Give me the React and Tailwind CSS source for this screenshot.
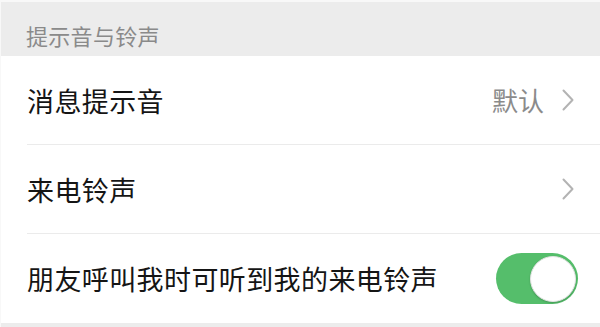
const font = { fontFamily: '"Noto Sans CJK SC", "Noto Sans", sans-serif' };

const Chevron = () => (
  <svg width="12" height="22" viewBox="0 0 12 22" fill="none" className="shrink-0">
    <path d="M1.5 1.5 L10.5 11 L1.5 20.5" stroke="#b3b3b3" strokeWidth="2" strokeLinecap="round" strokeLinejoin="round" />
  </svg>
);

const Row = ({ label, last, children }) => (
  <div className="bg-white pl-[26px] h-[89px] shrink-0">
    <div className={`flex h-full items-center justify-between ${last ? "" : "border-b border-[#ebebeb]"}`}>
      <span className="text-[27px] leading-none tracking-[0.4px] text-[#151515]">{label}</span>
      {children}
    </div>
  </div>
);

export default function App() {
  return (
    <div className="w-[600px] h-[327px] bg-[#ececec] border-t-2 border-l border-[#f8f8f8] overflow-hidden flex flex-col" style={font}>
      <div className="h-[54px] shrink-0 flex items-center pt-[12px] pl-[25px]">
        <span className="text-[22px] leading-none tracking-[0.3px] text-[#8a8a8a]">提示音与铃声</span>
      </div>
      <Row label="消息提示音">
        <div className="flex items-center gap-[18px] pr-[26px]">
          <span className="text-[26px] leading-none text-[#8b8b8b]">默认</span>
          <Chevron />
        </div>
      </Row>
      <Row label="来电铃声">
        <div className="flex items-center pr-[26px]">
          <Chevron />
        </div>
      </Row>
      <Row label="朋友呼叫我时可听到我的来电铃声" last>
        <div className="pr-[22px]">
          <div className="w-[82px] h-[51px] rounded-full bg-[#55be6b] flex items-center justify-end pr-[2px]">
            <div className="w-[46px] h-[46px] rounded-full bg-white border border-[#e3e3e3] shadow-[0_1px_2px_rgba(0,0,0,0.2)]" />
          </div>
        </div>
      </Row>
    </div>
  );
}
